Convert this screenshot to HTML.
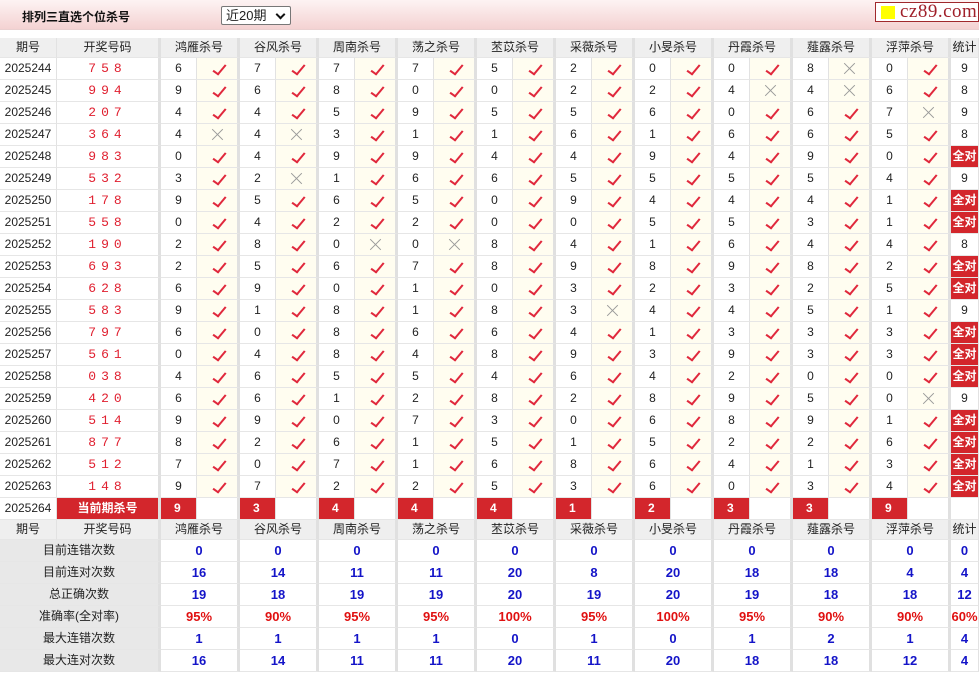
<!DOCTYPE html>
<html><head><meta charset="utf-8">
<style>
*{margin:0;padding:0;box-sizing:border-box}
body{width:979px;height:675px;overflow:hidden;background:#fff;font-family:"Liberation Sans","Noto Sans CJK SC",sans-serif;font-size:12px;color:#222;position:relative}
.top{position:absolute;left:0;top:0;width:979px;height:30px;background:linear-gradient(#fdf3f3,#f4d2d2);border-bottom:1px solid #ead0d0}
.ttl{position:absolute;left:22px;top:8px;font-weight:bold;font-size:12px;color:#111}
.sel{position:absolute;left:221px;top:6px;width:70px;height:19px;border:1px solid #777;border-radius:2px;background:#fff;font-size:13px;padding-left:4px;line-height:17px}
.sel:after{content:"";position:absolute;right:6px;top:4px;width:5px;height:5px;border-right:2px solid #111;border-bottom:2px solid #111;transform:rotate(45deg)}
.logo{position:absolute;left:875px;top:2px;width:104px;height:20px;border:1px solid #a0282c;background:#fff;font-family:"Liberation Serif",serif;font-size:19px;color:#a0202a;line-height:18px;padding-left:24px;letter-spacing:.5px}
.logo:before{content:"";position:absolute;left:5px;top:3px;width:14px;height:13px;background:#ffff00}
.tb{position:absolute;left:0;top:38px;width:979px}
.r{display:grid;grid-template-columns:57px 104px repeat(10,36px 43px) 28px;height:22px}
.r>*{border-right:1px solid #e2e2e2;border-bottom:1px solid #e6e6e6;text-align:center;line-height:21px;text-decoration:none;font-style:normal;font-weight:normal;position:relative;display:block}
.r>:nth-child(2),.r>u,.r>q,.r>em{border-right:3px solid #e0e0e0}
.h{height:20px}
.h>*{background:#efefef;line-height:19px;color:#222}
.h>.g{grid-column:span 2;border-right:3px solid #e0e0e0}
.r>s{background:#fff;color:#222}
u,q,em{background:#fffdf0}
em{background:#fff}
u:after{content:"";position:absolute;left:19px;top:4px;width:5px;height:11px;border-right:2px solid #e0283c;border-bottom:2px solid #e0283c;transform:rotate(40deg) skewY(-5deg)}
q:before,q:after{content:"";position:absolute;left:13px;top:10px;width:15px;height:1px;background:#999;transform:rotate(45deg)}
q:after{transform:rotate(-45deg)}
.n{color:#e02030;letter-spacing:5px;font-family:"Liberation Mono",monospace;font-size:13px}
.qd{background:#d3262c!important;color:#fff!important;font-weight:bold}
.k{background:#d3262c!important;color:#fff!important;font-weight:bold;text-align:left!important;padding-left:13px}
.sr>:first-child{grid-column:span 2;background:#e8e8e8;border-right:3px solid #e0e0e0}
.sr>.v{grid-column:span 2;color:#1414c8;font-weight:bold;font-size:13px;border-right:3px solid #e0e0e0}
.sr>.p{color:#e01010}
.sr>.z{border-right:1px solid #e2e2e2}
</style></head><body>
<div class="top"><div class="ttl">排列三直选个位杀号</div><div class="sel">近20期</div><div class="logo">cz89.com</div></div>
<div class="tb">
<div class="r h"><i>期号</i><i>开奖号码</i><i class="g">鸿雁杀号</i><i class="g">谷风杀号</i><i class="g">周南杀号</i><i class="g">荡之杀号</i><i class="g">苤苡杀号</i><i class="g">采薇杀号</i><i class="g">小旻杀号</i><i class="g">丹霞杀号</i><i class="g">薤露杀号</i><i class="g">浮萍杀号</i><i>统计</i></div>
<div class="r"><i>2025244</i><i class="n">758</i><s>6</s><u></u><s>7</s><u></u><s>7</s><u></u><s>7</s><u></u><s>5</s><u></u><s>2</s><u></u><s>0</s><u></u><s>0</s><u></u><s>8</s><q></q><s>0</s><u></u><i>9</i></div>
<div class="r"><i>2025245</i><i class="n">994</i><s>9</s><u></u><s>6</s><u></u><s>8</s><u></u><s>0</s><u></u><s>0</s><u></u><s>2</s><u></u><s>2</s><u></u><s>4</s><q></q><s>4</s><q></q><s>6</s><u></u><i>8</i></div>
<div class="r"><i>2025246</i><i class="n">207</i><s>4</s><u></u><s>4</s><u></u><s>5</s><u></u><s>9</s><u></u><s>5</s><u></u><s>5</s><u></u><s>6</s><u></u><s>0</s><u></u><s>6</s><u></u><s>7</s><q></q><i>9</i></div>
<div class="r"><i>2025247</i><i class="n">364</i><s>4</s><q></q><s>4</s><q></q><s>3</s><u></u><s>1</s><u></u><s>1</s><u></u><s>6</s><u></u><s>1</s><u></u><s>6</s><u></u><s>6</s><u></u><s>5</s><u></u><i>8</i></div>
<div class="r"><i>2025248</i><i class="n">983</i><s>0</s><u></u><s>4</s><u></u><s>9</s><u></u><s>9</s><u></u><s>4</s><u></u><s>4</s><u></u><s>9</s><u></u><s>4</s><u></u><s>9</s><u></u><s>0</s><u></u><i class="qd">全对</i></div>
<div class="r"><i>2025249</i><i class="n">532</i><s>3</s><u></u><s>2</s><q></q><s>1</s><u></u><s>6</s><u></u><s>6</s><u></u><s>5</s><u></u><s>5</s><u></u><s>5</s><u></u><s>5</s><u></u><s>4</s><u></u><i>9</i></div>
<div class="r"><i>2025250</i><i class="n">178</i><s>9</s><u></u><s>5</s><u></u><s>6</s><u></u><s>5</s><u></u><s>0</s><u></u><s>9</s><u></u><s>4</s><u></u><s>4</s><u></u><s>4</s><u></u><s>1</s><u></u><i class="qd">全对</i></div>
<div class="r"><i>2025251</i><i class="n">558</i><s>0</s><u></u><s>4</s><u></u><s>2</s><u></u><s>2</s><u></u><s>0</s><u></u><s>0</s><u></u><s>5</s><u></u><s>5</s><u></u><s>3</s><u></u><s>1</s><u></u><i class="qd">全对</i></div>
<div class="r"><i>2025252</i><i class="n">190</i><s>2</s><u></u><s>8</s><u></u><s>0</s><q></q><s>0</s><q></q><s>8</s><u></u><s>4</s><u></u><s>1</s><u></u><s>6</s><u></u><s>4</s><u></u><s>4</s><u></u><i>8</i></div>
<div class="r"><i>2025253</i><i class="n">693</i><s>2</s><u></u><s>5</s><u></u><s>6</s><u></u><s>7</s><u></u><s>8</s><u></u><s>9</s><u></u><s>8</s><u></u><s>9</s><u></u><s>8</s><u></u><s>2</s><u></u><i class="qd">全对</i></div>
<div class="r"><i>2025254</i><i class="n">628</i><s>6</s><u></u><s>9</s><u></u><s>0</s><u></u><s>1</s><u></u><s>0</s><u></u><s>3</s><u></u><s>2</s><u></u><s>3</s><u></u><s>2</s><u></u><s>5</s><u></u><i class="qd">全对</i></div>
<div class="r"><i>2025255</i><i class="n">583</i><s>9</s><u></u><s>1</s><u></u><s>8</s><u></u><s>1</s><u></u><s>8</s><u></u><s>3</s><q></q><s>4</s><u></u><s>4</s><u></u><s>5</s><u></u><s>1</s><u></u><i>9</i></div>
<div class="r"><i>2025256</i><i class="n">797</i><s>6</s><u></u><s>0</s><u></u><s>8</s><u></u><s>6</s><u></u><s>6</s><u></u><s>4</s><u></u><s>1</s><u></u><s>3</s><u></u><s>3</s><u></u><s>3</s><u></u><i class="qd">全对</i></div>
<div class="r"><i>2025257</i><i class="n">561</i><s>0</s><u></u><s>4</s><u></u><s>8</s><u></u><s>4</s><u></u><s>8</s><u></u><s>9</s><u></u><s>3</s><u></u><s>9</s><u></u><s>3</s><u></u><s>3</s><u></u><i class="qd">全对</i></div>
<div class="r"><i>2025258</i><i class="n">038</i><s>4</s><u></u><s>6</s><u></u><s>5</s><u></u><s>5</s><u></u><s>4</s><u></u><s>6</s><u></u><s>4</s><u></u><s>2</s><u></u><s>0</s><u></u><s>0</s><u></u><i class="qd">全对</i></div>
<div class="r"><i>2025259</i><i class="n">420</i><s>6</s><u></u><s>6</s><u></u><s>1</s><u></u><s>2</s><u></u><s>8</s><u></u><s>2</s><u></u><s>8</s><u></u><s>9</s><u></u><s>5</s><u></u><s>0</s><q></q><i>9</i></div>
<div class="r"><i>2025260</i><i class="n">514</i><s>9</s><u></u><s>9</s><u></u><s>0</s><u></u><s>7</s><u></u><s>3</s><u></u><s>0</s><u></u><s>6</s><u></u><s>8</s><u></u><s>9</s><u></u><s>1</s><u></u><i class="qd">全对</i></div>
<div class="r"><i>2025261</i><i class="n">877</i><s>8</s><u></u><s>2</s><u></u><s>6</s><u></u><s>1</s><u></u><s>5</s><u></u><s>1</s><u></u><s>5</s><u></u><s>2</s><u></u><s>2</s><u></u><s>6</s><u></u><i class="qd">全对</i></div>
<div class="r"><i>2025262</i><i class="n">512</i><s>7</s><u></u><s>0</s><u></u><s>7</s><u></u><s>1</s><u></u><s>6</s><u></u><s>8</s><u></u><s>6</s><u></u><s>4</s><u></u><s>1</s><u></u><s>3</s><u></u><i class="qd">全对</i></div>
<div class="r"><i>2025263</i><i class="n">148</i><s>9</s><u></u><s>7</s><u></u><s>2</s><u></u><s>2</s><u></u><s>5</s><u></u><s>3</s><u></u><s>6</s><u></u><s>0</s><u></u><s>3</s><u></u><s>4</s><u></u><i class="qd">全对</i></div>
<div class="r"><i>2025264</i><i class="qd">当前期杀号</i><s class="k">9</s><em></em><s class="k">3</s><em></em><s class="k">4</s><em></em><s class="k">4</s><em></em><s class="k">4</s><em></em><s class="k">1</s><em></em><s class="k">2</s><em></em><s class="k">3</s><em></em><s class="k">3</s><em></em><s class="k">9</s><em></em><i></i></div>
<div class="r h"><i>期号</i><i>开奖号码</i><i class="g">鸿雁杀号</i><i class="g">谷风杀号</i><i class="g">周南杀号</i><i class="g">荡之杀号</i><i class="g">苤苡杀号</i><i class="g">采薇杀号</i><i class="g">小旻杀号</i><i class="g">丹霞杀号</i><i class="g">薤露杀号</i><i class="g">浮萍杀号</i><i>统计</i></div>
<div class="r sr"><i>目前连错次数</i><i class="v">0</i><i class="v">0</i><i class="v">0</i><i class="v">0</i><i class="v">0</i><i class="v">0</i><i class="v">0</i><i class="v">0</i><i class="v">0</i><i class="v">0</i><i class="v z" style="grid-column:span 1">0</i></div>
<div class="r sr"><i>目前连对次数</i><i class="v">16</i><i class="v">14</i><i class="v">11</i><i class="v">11</i><i class="v">20</i><i class="v">8</i><i class="v">20</i><i class="v">18</i><i class="v">18</i><i class="v">4</i><i class="v z" style="grid-column:span 1">4</i></div>
<div class="r sr"><i>总正确次数</i><i class="v">19</i><i class="v">18</i><i class="v">19</i><i class="v">19</i><i class="v">20</i><i class="v">19</i><i class="v">20</i><i class="v">19</i><i class="v">18</i><i class="v">18</i><i class="v z" style="grid-column:span 1">12</i></div>
<div class="r sr"><i>准确率(全对率)</i><i class="v p">95%</i><i class="v p">90%</i><i class="v p">95%</i><i class="v p">95%</i><i class="v p">100%</i><i class="v p">95%</i><i class="v p">100%</i><i class="v p">95%</i><i class="v p">90%</i><i class="v p">90%</i><i class="v p z" style="grid-column:span 1">60%</i></div>
<div class="r sr"><i>最大连错次数</i><i class="v">1</i><i class="v">1</i><i class="v">1</i><i class="v">1</i><i class="v">0</i><i class="v">1</i><i class="v">0</i><i class="v">1</i><i class="v">2</i><i class="v">1</i><i class="v z" style="grid-column:span 1">4</i></div>
<div class="r sr"><i>最大连对次数</i><i class="v">16</i><i class="v">14</i><i class="v">11</i><i class="v">11</i><i class="v">20</i><i class="v">11</i><i class="v">20</i><i class="v">18</i><i class="v">18</i><i class="v">12</i><i class="v z" style="grid-column:span 1">4</i></div>
</div>
</body></html>
